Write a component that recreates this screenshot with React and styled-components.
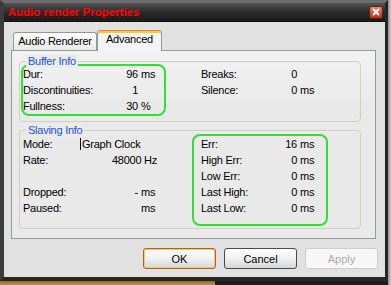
import React from "react"
import styled, { createGlobalStyle } from "styled-components"

const GlobalStyle = createGlobalStyle`
    html, body {
        margin: 0;
        padding: 0;
        background: #1d1d1d;
    }
    body {
        font-family: "Liberation Sans", Arial, sans-serif;
        font-size: 11px;
        color: #000;
    }
`

const Desktop = styled.div`
    display: grid;
    grid-template-columns: 388px 3px;
    grid-template-rows: 281px 4px;
    width: 391px;
    height: 285px;
    overflow: hidden;
    background: #1d1d1d;
`

const RightStrip = styled.div`
    grid-row: 1 / 3;
    grid-column: 2;
    background: linear-gradient(to right, #8d8d8d, #d0d0d0);
`

const BottomStrip = styled.div`
    grid-row: 2;
    grid-column: 1;
    display: flex;
`

const Wallpaper = styled.div`
    width: 215px;
    background: linear-gradient(#8e6b22, #c09445);
`

const Window = styled.div`
    box-sizing: border-box;
    display: flex;
    flex-direction: column;
    border-style: solid;
    border-width: 3px 3px 4px 4px;
    border-color: #6e6e6e #262626 #262626 #3c3c3c;
    background: #e1e1e1;
`

const TitleBar = styled.div`
    height: 19px;
    display: flex;
    align-items: center;
    justify-content: space-between;
    padding: 0 2px 0 4px;
    background: linear-gradient(#555 0%, #2e2e2e 45%, #1b1b1b 100%);
    border-bottom: 1px solid #111;
    box-sizing: border-box;
`

const Title = styled.span`
    font-weight: bold;
    font-size: 11.5px;
    line-height: 19px;
    color: #f01212;
    text-shadow: 1px 1px 0 #5a0000;
`

const CloseButton = styled.div`
    width: 14px;
    height: 13px;
    border-radius: 2px;
    border: 1px solid #5a1f14;
    box-sizing: border-box;
    background: linear-gradient(#f08a70, #d2462a 60%, #b9331b);
    display: flex;
    align-items: center;
    justify-content: center;
`

const Client = styled.div`
    flex: 1;
    display: flex;
    flex-direction: column;
    padding: 8px 7px 0 7px;
`

const TabStrip = styled.div`
    display: flex;
    align-items: flex-end;
    height: 21px;
    padding-left: 2px;
    margin-bottom: -1px;
    position: relative;
    z-index: 1;
`

const Tab = styled.div`
    box-sizing: border-box;
    width: ${p => p.$width}px;
    border: 1px solid #919b9c;
    border-bottom: none;
    border-radius: 3px 3px 0 0;
    text-align: center;
    letter-spacing: -0.25px;
    height: ${p => (p.$active ? 21 : 18)}px;
    margin-bottom: ${p => (p.$active ? 0 : 1)}px;
    line-height: ${p => (p.$active ? 13 : 17)}px;
    padding-top: ${p => (p.$active ? 2 : 0)}px;
    background: ${p => (p.$active ? "#f4f4f4" : "linear-gradient(#ffffff, #e9e9e6)")};
    border-top-color: ${p => (p.$active ? "#e68b2c" : "#919b9c")};
    box-shadow: ${p => (p.$active ? "inset 0 2px 0 #ffc73c" : "none")};
`

const Pane = styled.div`
    box-sizing: border-box;
    height: 189px;
    margin-right: 2px;
    border: 1px solid #919b9c;
    background: linear-gradient(#f2f2f2, #e9e9e9 30%);
    padding: 10px 14px 9px 7px;
    display: flex;
    flex-direction: column;
    gap: 8px;
`

const GroupBox = styled.div`
    position: relative;
    box-sizing: border-box;
    height: ${p => p.$height}px;
    border: 1px solid #d0d0bf;
    border-radius: 4px;
    padding: ${p => p.$padTop}px 0 0 1px;
    display: grid;
    grid-template-columns: 145px 136px;
    column-gap: 26px;
    align-items: start;
`

const Legend = styled.span`
    position: absolute;
    top: -7px;
    left: 6px;
    padding: 0 2px;
    line-height: 13px;
    color: #1c52d0;
    background: #ebebeb;
    letter-spacing: -0.25px;
`

const FieldBox = styled.div`
    border: 2px solid ${p => (p.$highlight ? "#35dc35" : "transparent")};
    border-radius: 8px;
    padding: 0 0 ${p => p.$padBottom || 0}px ${p => p.$padLeft || 0}px;
`

const Row = styled.div`
    display: grid;
    grid-template-columns: 57px ${p => p.$num}px auto;
    height: 16px;
    line-height: 16px;
    white-space: nowrap;
    letter-spacing: -0.25px;
`

const Label = styled.span``

const Num = styled.span`
    text-align: right;
`

const Unit = styled.span`
    padding-left: 3px;
`

const Wide = styled.span`
    grid-column: 2 / 4;
    text-align: ${p => (p.$right ? "right" : "left")};
    width: ${p => (p.$right ? "77px" : "auto")};
`

const Caret = styled.span`
    border-left: 1px solid #000;
    padding-left: 1px;
`

const ButtonRow = styled.div`
    display: flex;
    justify-content: flex-end;
    gap: 8px;
    margin-top: 9px;
`

const Button = styled.button`
    width: 73px;
    height: 21px;
    box-sizing: border-box;
    border-radius: 3px;
    font-family: "Liberation Sans", Arial, sans-serif;
    font-size: 11px;
    padding: 0;
    border: 1px solid ${p => (p.$disabled ? "#cdcdcd" : p.$focus ? "#a8641c" : "#4a4a4a")};
    background: ${p => (p.$disabled ? "#f7f7f7" : "linear-gradient(#ffffff, #f0f0f0 50%, #d6d6d6)")};
    color: ${p => (p.$disabled ? "#a9a9a9" : "#000")};
    box-shadow: ${p => (p.$focus ? "inset 0 0 0 1px #f7c57a" : "none")};
`

function Field({ num, label, value, unit }) {
    return (
        <Row $num={num}>
            <Label>{label}</Label>
            <Num>{value}</Num>
            <Unit>{unit}</Unit>
        </Row>
    )
}

function App() {
    return (
        <Desktop>
            <GlobalStyle />
            <Window>
                <TitleBar>
                    <Title>Audio render Properties</Title>
                    <CloseButton>
                        <svg width="8" height="8" viewBox="0 0 8 8">
                            <path d="M1 1 L7 7 M7 1 L1 7" stroke="#fff" strokeWidth="2" />
                        </svg>
                    </CloseButton>
                </TitleBar>
                <Client>
                    <TabStrip>
                        <Tab $width={84}>Audio Renderer</Tab>
                        <Tab $width={65} $active>Advanced</Tab>
                    </TabStrip>
                    <Pane>
                        <GroupBox $height={61} $padTop={2}>
                            <Legend>Buffer Info</Legend>
                            <FieldBox $highlight>
                                <Field num={58} label="Dur:" value="96" unit="ms" />
                                <Field num={58} label="Discontinuities:" value="1" />
                                <Field num={58} label="Fullness:" value="30" unit="%" />
                            </FieldBox>
                            <FieldBox $padLeft={7}>
                                <Field num={39} label="Breaks:" value="0" />
                                <Field num={39} label="Silence:" value="0" unit="ms" />
                            </FieldBox>
                        </GroupBox>
                        <GroupBox $height={99} $padTop={3}>
                            <Legend>Slaving Info</Legend>
                            <FieldBox>
                                <Row $num={58}>
                                    <Label>Mode:</Label>
                                    <Wide>
                                        <Caret>Graph Clock</Caret>
                                    </Wide>
                                </Row>
                                <Row $num={58}>
                                    <Label>Rate:</Label>
                                    <Wide $right>48000 Hz</Wide>
                                </Row>
                                <Row $num={58} />
                                <Field num={58} label="Dropped:" value="-" unit="ms" />
                                <Field num={58} label="Paused:" value="" unit="ms" />
                            </FieldBox>
                            <FieldBox $highlight $padLeft={7} $padBottom={8}>
                                <Field num={39} label="Err:" value="16" unit="ms" />
                                <Field num={39} label="High Err:" value="0" unit="ms" />
                                <Field num={39} label="Low Err:" value="0" unit="ms" />
                                <Field num={39} label="Last High:" value="0" unit="ms" />
                                <Field num={39} label="Last Low:" value="0" unit="ms" />
                            </FieldBox>
                        </GroupBox>
                    </Pane>
                    <ButtonRow>
                        <Button $focus>OK</Button>
                        <Button>Cancel</Button>
                        <Button $disabled>Apply</Button>
                    </ButtonRow>
                </Client>
            </Window>
            <RightStrip />
            <BottomStrip>
                <Wallpaper />
            </BottomStrip>
        </Desktop>
    )
}

export default App
